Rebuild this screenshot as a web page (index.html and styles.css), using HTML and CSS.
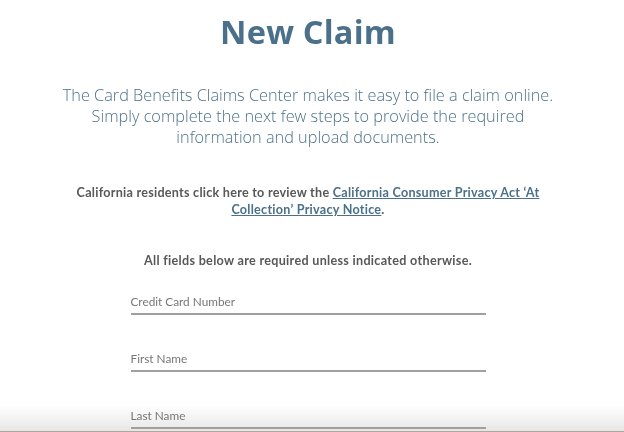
FILE: index.html
```html
<!DOCTYPE html>
<html lang="en">
<head>
<meta charset="utf-8">
<title>New Claim</title>
<link rel="stylesheet" href="styles.css">
</head>
<body>
<main class="page">
  <h1 class="title">New Claim</h1>
  <p class="intro">The Card Benefits Claims Center makes it easy to file a claim online.<br>Simply complete the next few steps to provide the required<br>information and upload documents.</p>
  <p class="notice">California residents click here to review the <a href="#" class="link">California Consumer Privacy Act ‘At<br>Collection’ Privacy Notice</a>.</p>
  <p class="required">All fields below are required unless indicated otherwise.</p>
  <form class="fields">
    <label class="field"><span class="label">Credit Card Number</span></label>
    <label class="field"><span class="label">First Name</span></label>
    <label class="field"><span class="label">Last Name</span></label>
  </form>
</main>
<div class="shade"></div>
</body>
</html>
```

FILE: styles.css
```css
html, body {
  margin: 0;
  padding: 0;
  background: #ffffff;
  overflow: hidden;
}
body {
  font-family: "Open Sans", "Noto Sans", sans-serif;
  height: 432px;
}
.page {
  position: relative;
  z-index: 1;
  width: 616px;
  display: flex;
  flex-direction: column;
  align-items: center;
}
.title {
  margin: 10px 0 0;
  font-size: 32.5px;
  line-height: 44px;
  font-weight: 700;
  color: #4b7089;
  letter-spacing: 0.2px;
}
.intro {
  margin: 31px 0 0;
  font-size: 16.3px;
  line-height: 21px;
  font-weight: 300;
  color: #4e7189;
  text-align: center;
}
.notice {
  margin: 36px 0 0;
  font-family: "Lato", "Open Sans", sans-serif;
  font-size: 12.6px;
  line-height: 17px;
  font-weight: 700;
  color: #585858;
  text-align: center;
  letter-spacing: 0.25px;
}
.link {
  color: #4b7089;
  text-decoration: underline;
}
.required {
  margin: 34px 0 0;
  font-family: "Lato", "Open Sans", sans-serif;
  font-size: 12.6px;
  line-height: 17px;
  font-weight: 700;
  color: #585858;
  letter-spacing: 0.3px;
}
.fields {
  margin-top: 25px;
  width: 355px;
  display: flex;
  flex-direction: column;
  gap: 36px;
}
.field {
  display: block;
  font-family: "Lato", "Open Sans", sans-serif;
  font-size: 11.8px;
  line-height: 16px;
  border-bottom: 2px solid #a0a0a0;
  padding-bottom: 3px;
}
.label {
  color: #777777;
}
.shade {
  position: fixed;
  z-index: 0;
  left: 0;
  right: 0;
  bottom: 0;
  height: 26px;
  background: linear-gradient(to bottom, rgba(232,232,232,0) 0%, rgba(228,228,228,0.9) 100%);
  border-bottom: 1px solid #b3a49d;
}
```
